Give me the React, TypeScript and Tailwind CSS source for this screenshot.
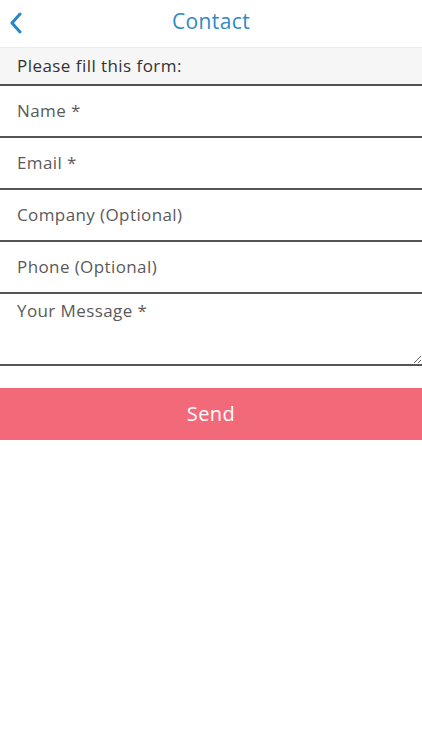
import React from "react";

const font = { fontFamily: '"Open Sans", "Noto Sans", sans-serif' };

export default function App() {
  const fields = ["Name *", "Email *", "Company (Optional)", "Phone (Optional)"];
  return (
    <div className="w-[422px] min-h-[750px] bg-white" style={font}>
      <div className="relative flex h-[47px] items-center justify-center pb-[3px]">
        <button className="absolute left-[6px] top-[10px] flex h-[26px] w-[20px] items-center justify-center">
          <svg width="14" height="22" viewBox="0 0 14 22" fill="none">
            <path d="M11 2 L3 11 L11 20" stroke="#2a86c5" strokeWidth="3" strokeLinecap="round" strokeLinejoin="round" />
          </svg>
        </button>
        <span className="text-[21px] text-[#2f8ac6] tracking-[0.4px]">Contact</span>
      </div>
      <div className="flex h-[39px] items-center border-t border-[#ececec] border-b-2 border-b-[#505050] bg-[#f6f6f6] px-[17px] text-[17px] tracking-[0.45px] text-[#333]">
        Please fill this form:
      </div>
      {fields.map((f) => (
        <div key={f} className="flex h-[52px] items-center border-b-2 border-[#555]">
          <input
            className="w-full bg-transparent px-[17px] text-[17px] tracking-[0.4px] text-[#333] outline-none placeholder:text-[#5a5a5a]"
            placeholder={f}
          />
        </div>
      ))}
      <div className="border-b-2 border-[#555]">
        <textarea
          className="block h-[70px] w-full bg-transparent px-[17px] pt-[4px] text-[17px] tracking-[0.4px] text-[#333] outline-none placeholder:text-[#5a5a5a]"
          placeholder="Your Message *"
        />
      </div>
      <div className="mt-[22px] flex h-[52px] items-center justify-center bg-[#f26a79] text-[20px] tracking-[0.4px] text-white">
        Send
      </div>
    </div>
  );
}
